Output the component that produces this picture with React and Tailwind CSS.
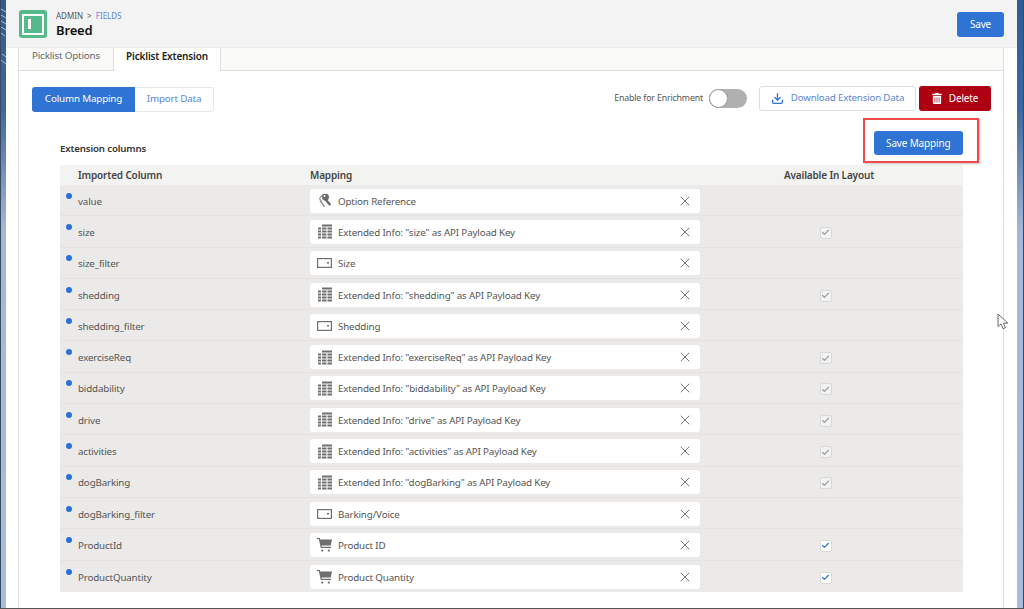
import { Download, X, Check } from 'lucide-react';
import { FaTrashAlt } from 'react-icons/fa';

const rows = [
  { name: 'value', icon: 'key', label: 'Option Reference' },
  { name: 'size', icon: 'table', label: 'Extended Info: "size" as API Payload Key', check: 'off' },
  { name: 'size_filter', icon: 'input', label: 'Size' },
  { name: 'shedding', icon: 'table', label: 'Extended Info: "shedding" as API Payload Key', check: 'off' },
  { name: 'shedding_filter', icon: 'input', label: 'Shedding' },
  { name: 'exerciseReq', icon: 'table', label: 'Extended Info: "exerciseReq" as API Payload Key', check: 'off' },
  { name: 'biddability', icon: 'table', label: 'Extended Info: "biddability" as API Payload Key', check: 'off' },
  { name: 'drive', icon: 'table', label: 'Extended Info: "drive" as API Payload Key', check: 'off' },
  { name: 'activities', icon: 'table', label: 'Extended Info: "activities" as API Payload Key', check: 'off' },
  { name: 'dogBarking', icon: 'table', label: 'Extended Info: "dogBarking" as API Payload Key', check: 'off' },
  { name: 'dogBarking_filter', icon: 'input', label: 'Barking/Voice' },
  { name: 'ProductId', icon: 'cart', label: 'Product ID', check: 'on' },
  { name: 'ProductQuantity', icon: 'cart', label: 'Product Quantity', check: 'on' },
];

function MapIcon({ type }) {
  if (type === 'cart') {
    return (
      <svg width="15" height="15" viewBox="0 0 15 15" fill="#6f6f6f">
        <path d="M0 1h2.8l.5 1.6H15l-1.3 6H4.6l.3 1.2h9v1.2H3.8L1.9 2.2H0z" />
        <circle cx="5.2" cy="13.6" r="1.1" />
        <circle cx="11.8" cy="13.6" r="1.1" />
      </svg>
    );
  }
  if (type === 'table') {
    return (
      <svg width="14" height="15" viewBox="0 0 14 15" fill="#6f6f6f">
        <rect x="4" y="0.5" width="10" height="2" />
        <rect x="0" y="3.5" width="3" height="2" />
        <rect x="4" y="3.5" width="4.5" height="2" />
        <rect x="9.5" y="3.5" width="4.5" height="2" />
        <rect x="0" y="6.5" width="3" height="2" />
        <rect x="4" y="6.5" width="4.5" height="2" />
        <rect x="9.5" y="6.5" width="4.5" height="2" />
        <rect x="0" y="9.5" width="3" height="2" />
        <rect x="4" y="9.5" width="4.5" height="2" />
        <rect x="9.5" y="9.5" width="4.5" height="2" />
        <rect x="0" y="12.5" width="3" height="2" />
        <rect x="4" y="12.5" width="4.5" height="2" />
        <rect x="9.5" y="12.5" width="4.5" height="2" />
      </svg>
    );
  }
  if (type === 'input') {
    return (
      <svg width="15" height="10" viewBox="0 0 15 10" fill="none">
        <rect x="0.6" y="0.6" width="13.8" height="8.8" stroke="#6f6f6f" strokeWidth="1.2" />
        <rect x="10" y="4" width="2" height="1.5" fill="#6f6f6f" />
      </svg>
    );
  }
  return (
    <svg width="14" height="15" viewBox="0 0 14 15" fill="none">
      <path d="M4 9 1.5 5.6 5 1.5" stroke="#9a9a9a" strokeWidth="1.2" />
      <path d="M2 7.5 6.5 13.5" stroke="#9a9a9a" strokeWidth="1.6" />
      <circle cx="7.5" cy="4.2" r="3.4" fill="#6a6a6a" />
      <circle cx="6.6" cy="3" r="0.9" fill="#ffffff" />
      <path d="M7.5 6.5 12.3 12" stroke="#6a6a6a" strokeWidth="2.6" />
    </svg>
  );
}

function Row({ row }) {
  return (
    <div className="flex h-[31.3px] items-center border-b border-[#e4e3e1] pt-[1px] last:border-b-0">
      <div className="flex w-[250px] shrink-0 items-start pl-[6px]">
        <span className="mt-[-1px] mr-[6px] h-[6px] w-[6px] shrink-0 rounded-full bg-[#2b6fd8]" />
        <span className="mt-[2px] text-[9.8px] leading-[12px] text-[#555555]">{row.name}</span>
      </div>
      <div className="flex h-[24px] w-[390px] shrink-0 items-center rounded-[3px] bg-white">
        <div className="flex w-[28px] shrink-0 justify-center pl-[1px]">
          <MapIcon type={row.icon} />
        </div>
        <span className="mt-[2px] flex-1 text-[9.8px] leading-[12px] text-[#555555]">{row.label}</span>
        <X className="mr-[7px] h-[16px] w-[16px] text-[#777777]" strokeWidth={1.5} />
      </div>
      <div className="flex flex-1 justify-center pr-[12px] pt-[2px]">
        {row.check === 'off' && (
          <span className="flex h-[12px] w-[12px] items-center justify-center rounded-[2px] border border-[#d9d9d9] bg-[#f2f2f2]">
            <Check className="h-[9px] w-[9px] text-[#9a9a9a]" strokeWidth={3} />
          </span>
        )}
        {row.check === 'on' && (
          <span className="flex h-[12px] w-[12px] items-center justify-center rounded-[2px] border border-[#d9d9d9] bg-white">
            <Check className="h-[9px] w-[9px] text-[#2b6fd8]" strokeWidth={3} />
          </span>
        )}
      </div>
    </div>
  );
}

export default function App() {
  return (
    <div className="relative h-[609px] w-[1024px] overflow-hidden bg-[linear-gradient(180deg,#2f5a94_0px,#3d689f_110px,#a3b7d8_230px,#a9bcdc_609px)] font-['Noto_Sans','Open_Sans',sans-serif] tracking-[-0.16px]">
      <div className="ml-[6px] flex h-[608px] w-[1011px] flex-col bg-white">
        <div className="flex h-[48px] shrink-0 items-center border-b border-[#ececec] bg-[#f3f3f3] pl-[13px] pr-[13px] pt-[1px]">
          <div className="flex h-[28px] w-[28px] items-center justify-center rounded-[3px] bg-[#55b98c]">
            <div className="flex h-[21px] w-[22px] items-center rounded-[1px] border-[2px] border-white pl-[4px]">
              <div className="h-[10px] w-[3px] bg-white" />
            </div>
          </div>
          <div className="ml-[9px]">
            <div className="text-[8px] leading-[12px] tracking-normal text-[#555555]">
              ADMIN <span className="mx-[2px]">&gt;</span> <span className="text-[#5c85d6]">FIELDS</span>
            </div>
            <div className="text-[13px] font-semibold leading-[16px] text-[#111111]">Breed</div>
          </div>
          <button className="ml-auto h-[25px] w-[47px] rounded-[3px] bg-[#2f74d4] text-[10px] text-white">Save</button>
        </div>
        <div className="ml-[12px] mr-[13px] flex flex-1 flex-col border-x border-[#dddddd]">
          <div className="flex h-[23px] shrink-0 border-b border-[#dddddd] bg-[#fafaf9]">
            <div className="flex w-[94px] items-center justify-center pb-[6px] text-[9.8px] text-[#666666]">Picklist Options</div>
            <div className="flex h-[23px] w-[108px] items-center justify-center border-x border-[#dddddd] bg-white pb-[6px] text-[10px] font-semibold text-[#222222]">
              Picklist Extension
            </div>
          </div>
          <div className="flex h-[42px] shrink-0 items-start pl-[13px] pr-[12px] pt-[15px]">
            <div className="flex h-[26px] items-center">
              <div className="flex h-[25px] w-[103px] items-center justify-center rounded-l-[3px] bg-[#2f74d4] pt-[1px] text-[9.8px] text-white">
                Column Mapping
              </div>
              <div className="flex h-[25px] w-[79px] items-center justify-center rounded-r-[3px] border border-[#e8e8e8] border-l-0 pt-[1px] text-[9.8px] text-[#5c85d6]">
                Import Data
              </div>
            </div>
            <div className="ml-auto flex items-center">
              <span className="mr-[6px] text-[8.8px] text-[#555555]">Enable for Enrichment</span>
              <span className="mr-[12px] flex h-[19px] w-[38px] items-center rounded-full bg-[#b0b0b0]">
                <span className="h-[19px] w-[19px] rounded-full border border-[#9a9a9a] bg-white" />
              </span>
              <button className="mr-[3px] flex h-[25px] w-[157px] items-center justify-center gap-[7px] rounded-[3px] border border-[#dedede] bg-white text-[9.7px] text-[#5c85d6]">
                <Download className="h-[13px] w-[13px] text-[#2f74d4]" strokeWidth={2.5} />
                Download Extension Data
              </button>
              <button className="flex h-[25px] w-[72px] items-center justify-center gap-[7px] rounded-[3px] bg-[#ad0012] text-[10px] text-white">
                <FaTrashAlt className="h-[11px] w-[10px]" />
                Delete
              </button>
            </div>
          </div>
          <div className="flex h-[52px] shrink-0 pl-[41px] pr-[40px]">
            <span className="mt-[29px] text-[9.7px] font-semibold text-[#333333]">Extension columns</span>
            <button className="ml-auto mt-[18px] h-[24px] w-[89.5px] rounded-[3px] bg-[#2f74d4] text-[10px] text-white">Save Mapping</button>
          </div>
          <div className="ml-[41px] mr-[40px] shrink-0">
            <div className="flex h-[20px] items-center bg-[#f3f3f2] text-[10px] font-semibold text-[#444444]">
              <span className="w-[250px] shrink-0 pl-[18px]">Imported Column</span>
              <span className="w-[390px] shrink-0">Mapping</span>
              <span className="flex-1 pr-[5px] text-center">Available In Layout</span>
            </div>
            <div className="bg-[#ebeae8]">
              {rows.map((row) => (
                <Row key={row.name} row={row} />
              ))}
            </div>
          </div>
        </div>
      </div>
      <div className="h-[1px] bg-[#555555]" />
      {/* wallpaper edges, annotation and pointer sit on top of the captured page */}
      <div className="absolute left-0 top-0 h-[608px] w-[1px] bg-[#3c4a60]" />
      <div className="absolute right-0 top-0 h-[608px] w-[1px] bg-[#3c4a60]" />
      <svg className="absolute left-[1px] top-[6px]" width="5" height="60" viewBox="0 0 5 60" stroke="#c9d6e8" strokeWidth="0.8">
        <path d="M0 3 5 6M0 9 5 12M0 15 5 18M0 21 5 24M0 27 4 30M1 48 5 51M0 54 5 58" />
      </svg>
      <div className="absolute left-[863px] top-[118px] h-[45px] w-[116px] border-2 border-[#f04a4a] shadow-[1px_1px_2px_rgba(0,0,0,0.25)]" />
      <svg className="absolute left-[997px] top-[313px]" width="14" height="18" viewBox="0 0 14 18" fill="white" stroke="#666666" strokeWidth="1">
        <path d="M1 1v12.5l3-2.6 2 4.8 2.4-1-2-4.6h4.4z" />
      </svg>
    </div>
  );
}
